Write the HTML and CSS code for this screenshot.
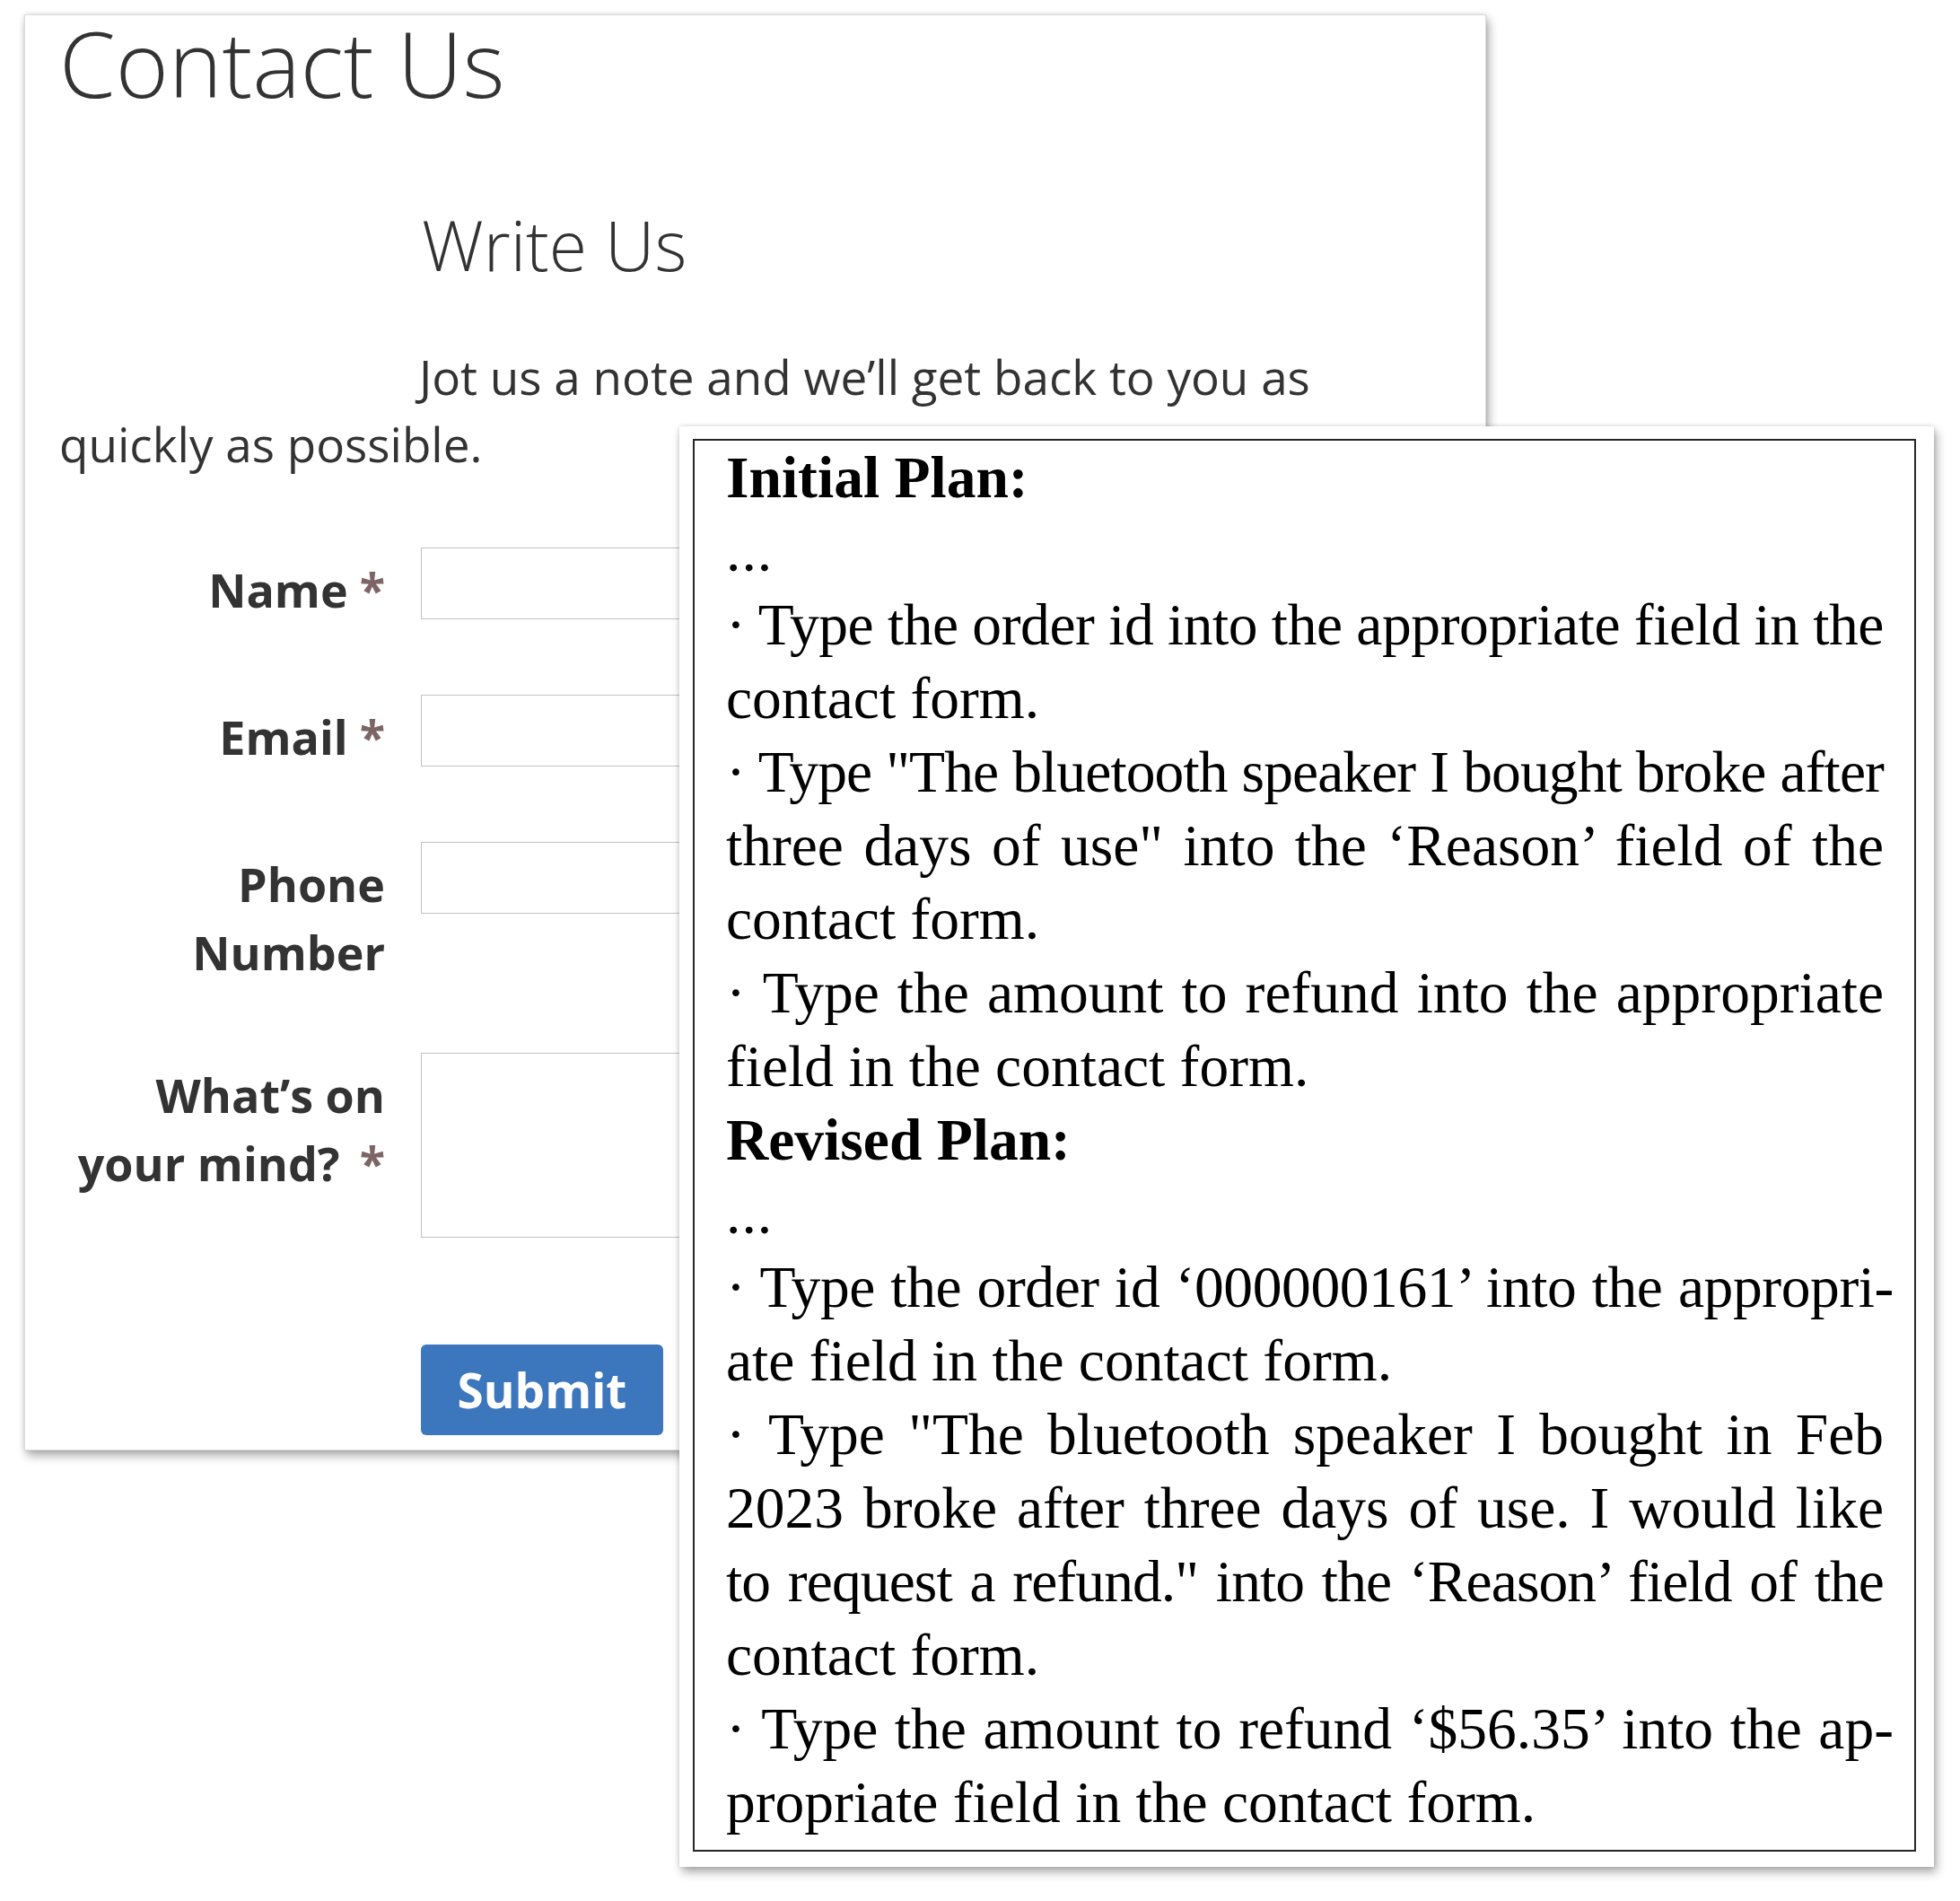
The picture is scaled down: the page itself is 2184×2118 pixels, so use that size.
FILE: index.html
```html
<!DOCTYPE html>
<html lang="en">
<head>
<meta charset="utf-8">
<title>Contact Us / Plan</title>
<link rel="stylesheet" href="styles.css">
</head>
<body>
<div class="canvas">
  <section class="shot">
    <h1 class="page-title">Contact Us</h1>
    <h2 class="legend">Write Us</h2>
    <p class="note">Jot us a note and we’ll get back to you as<br>quickly as possible.</p>
    <form class="form">
      <div class="row">
        <label class="label">Name<span class="req">*</span></label>
        <div class="control"><div class="input"></div></div>
      </div>
      <div class="row">
        <label class="label">Email<span class="req">*</span></label>
        <div class="control"><div class="input"></div></div>
      </div>
      <div class="row row-tight">
        <label class="label">Phone Number</label>
        <div class="control"><div class="input"></div></div>
      </div>
      <div class="row">
        <label class="label">What’s on your mind?<span class="req req-wide">*</span></label>
        <div class="control"><div class="textarea"></div></div>
      </div>
      <div class="actions">
        <div class="submit">Submit</div>
      </div>
    </form>
  </section>

  <section class="plan-card">
    <div class="plan">
      <div class="ln b">Initial Plan:</div>
      <div class="ln dots">...</div>
      <div class="ln j snug">· Type the order id into the appropriate field in the</div>
      <div class="ln">contact form.</div>
      <div class="ln j tight">· Type "The bluetooth speaker I bought broke after</div>
      <div class="ln j">three days of use" into the ‘Reason’ field of the</div>
      <div class="ln">contact form.</div>
      <div class="ln j">· Type the amount to refund into the appropriate</div>
      <div class="ln">field in the contact form.</div>
      <div class="ln b">Revised Plan:</div>
      <div class="ln dots">...</div>
      <div class="ln j hy snug">· Type the order id ‘000000161’ into the appropri-</div>
      <div class="ln">ate field in the contact form.</div>
      <div class="ln j">· Type "The bluetooth speaker I bought in Feb</div>
      <div class="ln j">2023 broke after three days of use. I would like</div>
      <div class="ln j tight">to request a refund." into the ‘Reason’ field of the</div>
      <div class="ln">contact form.</div>
      <div class="ln j hy">· Type the amount to refund ‘$56.35’ into the ap-</div>
      <div class="ln">propriate field in the contact form.</div>
    </div>
  </section>
</div>
</body>
</html>
```
FILE: styles.css
```css
html, body {
  margin: 0;
  padding: 0;
  background: #ffffff;
}

.canvas {
  position: relative;
  width: 2184px;
  height: 2118px;
  overflow: hidden;
  padding-top: 16px;
  box-sizing: border-box;
}

/* ---------- left: screenshot of the contact form ---------- */
.shot {
  margin-left: 27px;
  width: 1629px;
  height: 1600px;
  box-sizing: border-box;
  padding: 1px 38px 0 38px;
  background: #ffffff;
  border: 1px solid #dcdcdc;
  box-shadow: 3px 6px 10px rgba(0, 0, 0, 0.32), 0 0 5px rgba(0, 0, 0, 0.12);
  font-family: "Open Sans", "Liberation Sans", sans-serif;
  color: #333333;
}

.page-title {
  margin: 0;
  font-size: 101px;
  line-height: 104px;
  font-weight: 300;
}

.legend {
  margin: 112px 0 0 404px;
  font-size: 77px;
  line-height: 77px;
  font-weight: 350;
}

.note {
  margin: 71px 0 0 0;
  font-size: 53px;
  line-height: 75px;
  font-weight: 400;
  text-indent: 401px;
}

.form {
  margin-top: 78px;
  display: flex;
  flex-direction: column;
}

.row {
  display: grid;
  grid-template-columns: 363px 1fr;
  column-gap: 40px;
  align-items: start;
  margin-bottom: 79px;
}

.row-tight {
  margin-bottom: 74px;
}

.label {
  padding-top: 9px;
  text-align: right;
  font-size: 52px;
  line-height: 76px;
  font-weight: 700;
  color: #333333;
}

.req {
  margin-left: 13px;
  color: #7d6565;
}

.req-wide {
  margin-left: 22px;
}

.input {
  height: 80px;
  box-sizing: border-box;
  border: 1px solid #c2c2c2;
  background: #ffffff;
}

.textarea {
  height: 206px;
  box-sizing: border-box;
  border: 1px solid #c2c2c2;
  background: #ffffff;
}

.actions {
  margin-top: 40px;
  padding-left: 403px;
}

.submit {
  width: 270px;
  height: 101px;
  border-radius: 6px;
  background: #3c76bd;
  color: #ffffff;
  font-size: 53px;
  font-weight: 700;
  display: flex;
  align-items: center;
  justify-content: center;
}

/* ---------- right: plan text box ---------- */
.plan-card {
  position: absolute;
  left: 757px;
  top: 475px;
  width: 1398px;
  height: 1605px;
  box-sizing: border-box;
  padding: 14px 20px 17px 15px;
  background: #ffffff;
  box-shadow: 3px 6px 10px rgba(0, 0, 0, 0.32), 0 0 5px rgba(0, 0, 0, 0.14);
}

.plan {
  height: 100%;
  box-sizing: border-box;
  border: 2px solid #262626;
  padding: 0 34px 0 35px;
  font-family: "Liberation Serif", "Times New Roman", serif;
  font-size: 65.5px;
  line-height: 82px;
  color: #000000;
}

.ln {
  text-align: left;
}

.b {
  font-weight: 700;
}

.dots {
  letter-spacing: 1px;
}

.j {
  text-align: justify;
  text-align-last: justify;
  word-spacing: -8px;
}

.snug {
  letter-spacing: -0.4px;
}

.tight {
  letter-spacing: -0.9px;
}

.hy {
  margin-right: -11px;
}
```
